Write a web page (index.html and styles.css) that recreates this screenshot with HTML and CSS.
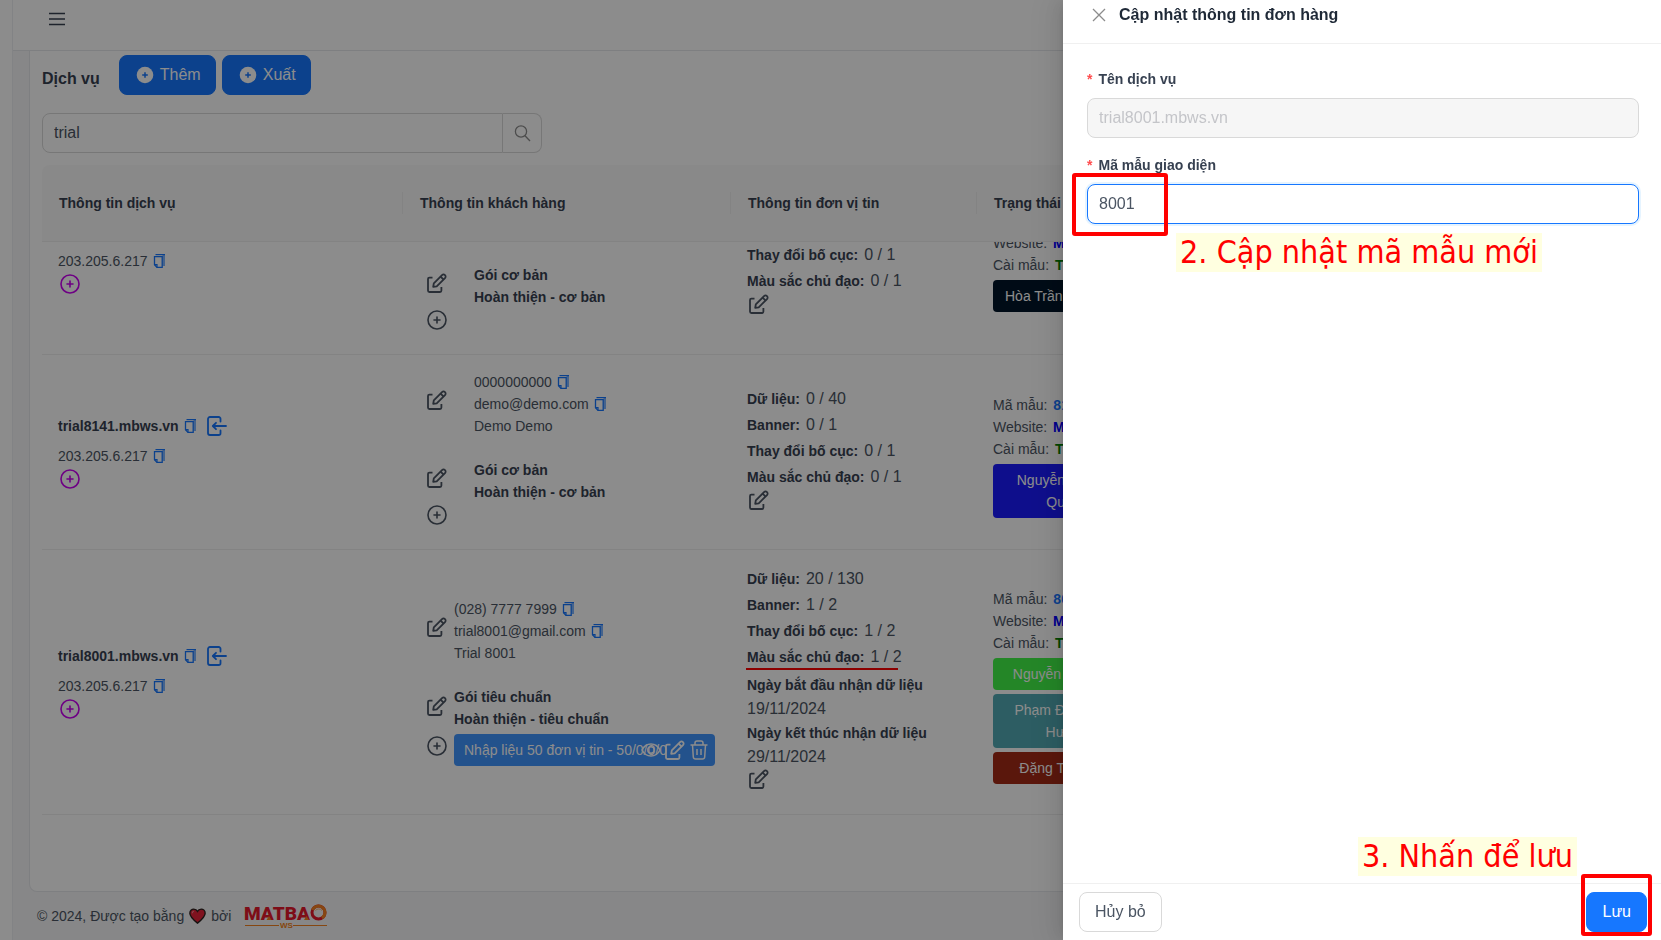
FILE: index.html
```html
<!DOCTYPE html>
<html lang="vi">
<head>
<meta charset="utf-8">
<meta name="viewport" content="width=device-width, initial-scale=1">
<title>Dịch vụ</title>
<link rel="stylesheet" href="styles.css">
</head>
<body>
<svg class="sprite" aria-hidden="true">
  <symbol id="i-edit" viewBox="0 0 20 20" fill="none" stroke="currentColor" stroke-width="1.8" stroke-linejoin="round">
    <path d="M5.500 4.600H2.400a1.400 1.400 0 0 0-1.400 1.400V17.600A1.400 1.400 0 0 0 2.400 19H13a1.400 1.400 0 0 0 1.400-1.400V14"/>
    <path d="M6.200 13.800l.600-3.400L15 2.100a2.100 2.100 0 0 1 3 3L9.700 13.300z"/>
    <path d="M13.600 3.600l3 3"/>
  </symbol>
  <symbol id="i-plus" viewBox="0 0 20 20" fill="none" stroke="currentColor" stroke-width="1.600" stroke-linecap="round">
    <circle cx="10" cy="10" r="9"/><path d="M10 7v6M7 10h6"/>
  </symbol>
  <symbol id="i-plus-fill" viewBox="0 0 18 18">
    <circle cx="9" cy="9" r="8.300" fill="currentColor"/><path d="M9 6.200v5.600M6.200 9h5.600" stroke="#1677ff" stroke-width="1.500"/>
  </symbol>
  <symbol id="i-copy" viewBox="0 0 12 14" fill="none" stroke="currentColor">
    <path d="M9.500 1H12V12H9.500z" fill="currentColor" fill-opacity=".55" stroke="none"/>
    <path d="M2.500.600H12" stroke-width="1.200"/>
    <path d="M1.500 2.600H9.200V13.400H4L1.500 10.800z" stroke-width="1.300"/>
    <path d="M1.500 10.600H4V13.400" stroke-width="1.200"/>
  </symbol>
  <symbol id="i-login" viewBox="0 0 20 20" fill="none" stroke="currentColor" stroke-width="1.800" stroke-linecap="round" stroke-linejoin="round">
    <path d="M13.500 5.500V2.800A1.800 1.800 0 0 0 11.700 1H3A2 2 0 0 0 1 3V17A2 2 0 0 0 3 19H11.700A1.800 1.800 0 0 0 13.500 17.200V14.500"/>
    <path d="M19 10H6M9 6.800L5.800 10 9 13.200"/>
  </symbol>
  <symbol id="i-eye" viewBox="0 0 20 20" fill="none" stroke="currentColor" stroke-width="1.500">
    <path d="M1 10C3 6 6 4 10 4s7 2 9 6c-2 4-5 6-9 6s-7-2-9-6z"/><circle cx="10" cy="10" r="3.200"/>
  </symbol>
  <symbol id="i-trash" viewBox="0 0 20 20" fill="none" stroke="currentColor" stroke-width="1.500">
    <path d="M1.500 5H18.500M6 5V3Q6 1 8 1H12Q14 1 14 3V5M3.500 5L4.300 17Q4.500 19 6.500 19H13.500Q15.500 19 15.700 17L16.500 5M8 9V15M12 9V15"/>
  </symbol>
</svg>

<div class="app">
  <aside class="rail"></aside>
  <div class="shell">
    <header class="topbar">
      <button class="menu" type="button" aria-label="Menu">
        <svg width="16" height="14" viewBox="0 0 16 14" stroke="currentColor" stroke-width="1.500"><path d="M0 1.500H16M0 7H16M0 12.500H16"/></svg>
      </button>
    </header>
    <main class="card">
      <div class="heading">
        <h1>Dịch vụ</h1>
        <button class="btn primary" type="button"><svg class="ic18"><use href="#i-plus-fill"/></svg>Thêm</button>
        <button class="btn primary" type="button"><svg class="ic18"><use href="#i-plus-fill"/></svg>Xuất</button>
      </div>
      <form class="search">
        <input type="text" value="trial" aria-label="Tìm kiếm">
        <button type="button" aria-label="Tìm"><svg width="17" height="17" viewBox="0 0 17 17" fill="none" stroke="currentColor" stroke-width="1.300"><circle cx="7" cy="6.500" r="5.600"/><path d="M11 10.700L16 16"/></svg></button>
      </form>
      <table class="grid head">
        <colgroup><col class="c1"><col class="c2"><col class="c3"><col></colgroup>
        <thead><tr>
          <th><span>Thông tin dịch vụ</span></th>
          <th><span>Thông tin khách hàng</span></th>
          <th><span>Thông tin đơn vị tin</span></th>
          <th><span>Trạng thái</span></th>
        </tr></thead>
      </table>
      <div class="scroller">
        <table class="grid body">
          <colgroup><col class="c1"><col class="c2"><col class="c3"><col></colgroup>
          <tbody>
            <tr class="partial">
              <td class="service">
                <div class="line">203.205.6.217 <button type="button" aria-label="Sao chép"><svg class="copy"><use href="#i-copy"/></svg></button></div>
                <button class="add" type="button" aria-label="Thêm IP"><svg class="ic20"><use href="#i-plus"/></svg></button>
              </td>
              <td class="customer wide">
                <div class="pair pack">
                  <div class="tools"><button type="button" aria-label="Sửa gói"><svg class="ic20"><use href="#i-edit"/></svg></button><button type="button" aria-label="Thêm gói"><svg class="ic20"><use href="#i-plus"/></svg></button></div>
                  <div><b>Gói cơ bản</b><b>Hoàn thiện - cơ bản</b></div>
                </div>
              </td>
              <td class="units">
                <p><b>Thay đổi bố cục:</b>0 / 1</p>
                <p><b>Màu sắc chủ đạo:</b>0 / 1</p>
                <button class="modify" type="button" aria-label="Sửa"><svg class="ic20"><use href="#i-edit"/></svg></button>
              </td>
              <td class="status">
                <p>Website: <b class="blue">M</b></p>
                <p>Cài mẫu: <b class="green">T</b></p>
                <div class="tag navy">Hòa Trần&nbsp;</div>
              </td>
            </tr>
            <tr>
              <td class="service">
                <div class="line site"><b>trial8141.mbws.vn</b> <button type="button" aria-label="Sao chép"><svg class="copy"><use href="#i-copy"/></svg></button><button class="login" type="button" aria-label="Đăng nhập"><svg class="ic20"><use href="#i-login"/></svg></button></div>
                <div class="line">203.205.6.217 <button type="button" aria-label="Sao chép"><svg class="copy"><use href="#i-copy"/></svg></button></div>
                <button class="add" type="button" aria-label="Thêm IP"><svg class="ic20"><use href="#i-plus"/></svg></button>
              </td>
              <td class="customer wide">
                <div class="pair">
                  <div class="tools"><button type="button" aria-label="Sửa khách hàng"><svg class="ic20"><use href="#i-edit"/></svg></button></div>
                  <div>
                    <div class="line">0000000000 <button type="button" aria-label="Sao chép"><svg class="copy"><use href="#i-copy"/></svg></button></div>
                    <div class="line">demo@demo.com <button type="button" aria-label="Sao chép"><svg class="copy"><use href="#i-copy"/></svg></button></div>
                    <div class="line">Demo Demo</div>
                  </div>
                </div>
                <div class="pair pack">
                  <div class="tools"><button type="button" aria-label="Sửa gói"><svg class="ic20"><use href="#i-edit"/></svg></button><button type="button" aria-label="Thêm gói"><svg class="ic20"><use href="#i-plus"/></svg></button></div>
                  <div><b>Gói cơ bản</b><b>Hoàn thiện - cơ bản</b></div>
                </div>
              </td>
              <td class="units">
                <p><b>Dữ liệu:</b>0 / 40</p>
                <p><b>Banner:</b>0 / 1</p>
                <p><b>Thay đổi bố cục:</b>0 / 1</p>
                <p><b>Màu sắc chủ đạo:</b>0 / 1</p>
                <button class="modify" type="button" aria-label="Sửa"><svg class="ic20"><use href="#i-edit"/></svg></button>
              </td>
              <td class="status">
                <p>Mã mẫu: <b class="link">8141</b></p>
                <p>Website: <b class="blue">M</b></p>
                <p>Cài mẫu: <b class="green">T</b></p>
                <div class="tag indigo">Nguyễn<br>Qu</div>
              </td>
            </tr>
            <tr>
              <td class="service">
                <div class="line site"><b>trial8001.mbws.vn</b> <button type="button" aria-label="Sao chép"><svg class="copy"><use href="#i-copy"/></svg></button><button class="login" type="button" aria-label="Đăng nhập"><svg class="ic20"><use href="#i-login"/></svg></button></div>
                <div class="line">203.205.6.217 <button type="button" aria-label="Sao chép"><svg class="copy"><use href="#i-copy"/></svg></button></div>
                <button class="add" type="button" aria-label="Thêm IP"><svg class="ic20"><use href="#i-plus"/></svg></button>
              </td>
              <td class="customer">
                <div class="pair">
                  <div class="tools"><button type="button" aria-label="Sửa khách hàng"><svg class="ic20"><use href="#i-edit"/></svg></button></div>
                  <div>
                    <div class="line">(028) 7777 7999 <button type="button" aria-label="Sao chép"><svg class="copy"><use href="#i-copy"/></svg></button></div>
                    <div class="line">trial8001@gmail.com <button type="button" aria-label="Sao chép"><svg class="copy"><use href="#i-copy"/></svg></button></div>
                    <div class="line">Trial 8001</div>
                  </div>
                </div>
                <div class="pair pack">
                  <div class="tools"><button type="button" aria-label="Sửa gói"><svg class="ic20"><use href="#i-edit"/></svg></button><button type="button" aria-label="Thêm gói"><svg class="ic20"><use href="#i-plus"/></svg></button></div>
                  <div class="grow">
                    <b>Gói tiêu chuẩn</b><b>Hoàn thiện - tiêu chuẩn</b>
                    <div class="addon">Nhập liệu 50 đơn vị tin - 50/0/0/0
                      <span class="actions">
                        <button type="button" aria-label="Xem"><svg class="ic20"><use href="#i-eye"/></svg></button>
                        <button type="button" aria-label="Sửa"><svg class="ic20"><use href="#i-edit"/></svg></button>
                        <button type="button" aria-label="Xóa"><svg class="ic20"><use href="#i-trash"/></svg></button>
                      </span>
                    </div>
                  </div>
                </div>
              </td>
              <td class="units">
                <p><b>Dữ liệu:</b>20 / 130</p>
                <p><b>Banner:</b>1 / 2</p>
                <p><b>Thay đổi bố cục:</b>1 / 2</p>
                <p class="marked"><b>Màu sắc chủ đạo:</b>1 / 2</p>
                <dl>
                  <dt>Ngày bắt đầu nhận dữ liệu</dt><dd>19/11/2024</dd>
                  <dt>Ngày kết thúc nhận dữ liệu</dt><dd>29/11/2024</dd>
                </dl>
                <button class="modify" type="button" aria-label="Sửa"><svg class="ic20"><use href="#i-edit"/></svg></button>
              </td>
              <td class="status">
                <p>Mã mẫu: <b class="link">8001</b></p>
                <p>Website: <b class="blue">M</b></p>
                <p>Cài mẫu: <b class="green">T</b></p>
                <div class="tag lime">Nguyễn&nbsp;</div>
                <div class="tag teal">Phạm Đ<br>Hư</div>
                <div class="tag brick">Đặng T</div>
              </td>
            </tr>
          </tbody>
        </table>
      </div>
    </main>
    <footer class="footer">
      <span>© 2024, Được tạo bằng</span>
      <svg class="heart" viewBox="0 0 16 15"><path d="M8 14.200C4 11 .800 8.300.800 4.900.800 2.600 2.500 1 4.500 1 6 1 7.300 1.800 8 3.100 8.700 1.800 10 1 11.500 1c2 0 3.700 1.600 3.700 3.900C15.200 8.300 12 11 8 14.200z" fill="#e8213a" stroke="#2b2320" stroke-width="1.300"/><path d="M3 5Q3 3.200 4.600 3" stroke="#f58a94" fill="none"/></svg>
      <span>bởi</span>
      <svg class="logo" viewBox="0 0 82 26" role="img" aria-label="MATBAO WS">
        <text class="logo-name" x="-1" y="17">MATBA</text>
        <circle cx="73.500" cy="9.500" r="6.500" fill="none" stroke="#e5192d" stroke-width="3"/>
        <path d="M67.500 7A6.500 6.500 0 1 1 77 15" fill="none" stroke="#f58220" stroke-width="3"/>
        <path d="M70.500 7.500A4.200 4.200 0 0 1 77 7.500" fill="none" stroke="#f9b27a" stroke-width="1"/>
        <path d="M21.500 17l2.500-4 2.500 4zM59 17l2.500-4 2.500 4z" fill="#f58220"/>
        <path d="M0 22.500H34M48 22.500H82" stroke="#f58220"/>
        <text class="logo-sub" x="35" y="25">WS</text>
      </svg>
    </footer>
  </div>
</div>

<div class="mask"></div>

<section class="drawer" role="dialog" aria-labelledby="drawer-title">
  <header class="drawer-head">
    <button type="button" aria-label="Đóng"><svg width="14" height="14" viewBox="0 0 14 14" stroke="currentColor" stroke-width="1.300"><path d="M1 1L13 13M13 1L1 13"/></svg></button>
    <h2 id="drawer-title">Cập nhật thông tin đơn hàng</h2>
  </header>
  <form class="drawer-body" id="order">
    <div class="field">
      <label for="service-name"><i>*</i>Tên dịch vụ</label>
      <input id="service-name" type="text" value="trial8001.mbws.vn" disabled>
    </div>
    <div class="field">
      <label for="template-code"><i>*</i>Mã mẫu giao diện</label>
      <div class="control">
        <input id="template-code" class="active" type="text" value="8001">
        <span class="frame frame-code"></span>
        <span class="note note-code">2. Cập nhật mã mẫu mới</span>
      </div>
    </div>
  </form>
  <footer class="drawer-foot">
    <button class="btn" type="button">Hủy bỏ</button>
    <div class="control">
      <button class="btn primary save" type="submit" form="order">Lưu</button>
      <span class="frame frame-save"></span>
      <span class="note note-save">3. Nhấn để lưu</span>
    </div>
  </footer>
</section>
</body>
</html>
```
FILE: styles.css
```css
* { box-sizing: border-box; }

body {
  margin: 0;
  overflow: hidden;
  font-family: "Liberation Sans", Arial, sans-serif;
  font-size: 14px;
  line-height: 22px;
  color: #4b5563;
  background: #fff;
}

button, input { font: inherit; color: inherit; }
button { padding: 0; border: 0; background: none; display: inline-flex; align-items: center; justify-content: center; }
p, h1, h2, dl, dd { margin: 0; }
b { color: #374151; }

.sprite { display: none; }
.ic20 { width: 20px; height: 20px; }
.ic18 { width: 18px; height: 18px; }
.copy { width: 12px; height: 14px; }

/* Shell */
.app { display: flex; height: 100vh; }
.rail { width: 13px; flex: none; border-right: 1px solid #edeff2; }
.shell { flex: 1; min-width: 0; display: flex; flex-direction: column; background: #f6f6f7; }
.topbar {
  display: flex;
  align-items: flex-start;
  flex: none;
  height: 51px;
  padding: 12px 36px;
  background: #fff;
  border-bottom: 1px solid #e6e8ec;
}
.menu { color: #374151; }
.menu svg { display: block; }

.card {
  flex: 1;
  min-height: 0;
  margin: 0 16px;
  padding: 4px 12px 0;
  background: #fff;
  border: 1px solid #e6e8ec;
  border-top: 0;
  border-radius: 0 0 8px 8px;
}

.btn {
  height: 40px;
  padding: 0 15px;
  font-size: 16px;
  line-height: 24px;
  background: #fff;
  border: 1px solid #d9d9d9;
  border-radius: 8px;
}
.btn.primary { gap: 6px; color: #fff; background: #1677ff; border-color: #1677ff; }

.heading { display: flex; gap: 6px; }
.heading h1 { margin-right: 13px; padding-top: 13px; font-size: 16px; line-height: 22px; color: #374151; }
.heading .btn { padding: 0 14px 0 16px; }

.search { display: flex; width: 500px; margin-top: 18px; }
.search input { flex: 1; min-width: 0; height: 40px; padding: 0 11px; font-size: 16px; border: 1px solid #d9d9d9; border-radius: 8px 0 0 8px; background: #fff; outline: 0; }
.search button { width: 39px; border: 1px solid #d9d9d9; border-left: 0; border-radius: 0 8px 8px 0; color: #8c8c8c; }

/* Tables */
.grid { width: 100%; table-layout: fixed; border-collapse: separate; border-spacing: 0; }
.c1 { width: 361px; }
.c2 { width: 328px; }
.c3 { width: 246px; }

.head { margin-top: 12px; }
.head th {
  height: 77px;
  padding: 0;
  text-align: left;
  color: #374151;
  background: #fafafa;
  border-bottom: 1px solid #eeeeee;
}
.head th:first-child { border-top-left-radius: 8px; }
.head th span { display: block; padding: 0 17px; border-right: 1px solid #eeeeee; }

.scroller { overflow: hidden; }
.body td { padding: 16px; vertical-align: middle; border-bottom: 1px solid #eeeeee; }
.body { margin-top: -10px; }

.line { display: flex; align-items: center; gap: 5px; height: 22px; }
.line button { height: 22px; color: #1677ff; }
.site { height: 37px; }
.line .login { margin-left: 6px; }

.add { display: block; height: 30px; margin-left: 2px; padding: 2px 0 8px; color: #c800f0; }

.customer .pair { display: grid; grid-template-columns: 35px 1fr; }
.customer.wide .pair { grid-template-columns: 55px 1fr; }
.pair + .pair { margin-top: 22px; }
.pair b { display: block; }
.tools { display: flex; flex-direction: column; align-items: flex-start; padding: 19px 0 0 8px; }
.pack .tools { justify-content: space-around; padding-top: 0; min-height: 74px; }
.tools button, .modify { color: #4b5563; }
.modify { height: 29px; padding: 0 0 9px 2px; display: block; }

.addon {
  position: relative;
  margin-top: 4px;
  padding: 5px 10px;
  color: #fff;
  background: #4096ff;
  border-radius: 4px;
  white-space: nowrap;
}
.actions { position: absolute; top: 6px; right: 6px; display: flex; gap: 4px; }

.units p { position: relative; height: 26px; line-height: 26px; font-size: 16px; }
.units p b { margin-right: 6px; font-size: 14px; }
.units dl { margin-top: 3px; line-height: 24px; }
.units dt { font-weight: bold; color: #374151; }
.units dd { font-size: 16px; }
.marked::after { content: ""; position: absolute; left: -1px; bottom: 0; width: 152px; height: 2px; background: #f00; }

.body .status { padding-top: 24px; }
.status p b { margin-left: 2px; }
.status .link { color: #1677ff; }
.status .blue { color: #0000ff; }
.status .green { color: #008000; }
.tag { width: 140px; margin-top: 4px; padding: 5px 68px 5px 12px; text-align: right; color: #fff; border-radius: 4px; white-space: nowrap; }
.navy { background: #001529; }
.indigo { background: #1a1aff; }
.lime { background: #42f548; }
.teal { background: #52aab4; }
.brick { background: #a52a16; }

/* First row sits partly under the table head */
.body .partial td { padding-top: 0; vertical-align: bottom; }
.body .partial .service { padding-bottom: 52px; }
.body .partial .units { padding-bottom: 31px; }
.body .partial .status { padding-bottom: 42px; }

/* Page footer */
.footer { flex: none; display: flex; align-items: center; height: 48px; padding: 0 24px; }
.heart { width: 17px; height: 16px; margin: 0 5px; }
.logo { width: 82px; height: 26px; margin-left: 14px; overflow: visible; }
.logo-name { font: 900 19px Roboto, sans-serif; fill: #e5192d; }
.logo-sub { font: bold 8px "Liberation Sans", sans-serif; fill: #f58220; }

/* Drawer */
.mask { position: fixed; inset: 0; background: rgba(0, 0, 0, 0.45); }
.drawer {
  position: fixed;
  inset: 0 0 0 auto;
  width: 36%;
  display: flex;
  flex-direction: column;
  background: #fff;
  box-shadow: -6px 0 16px rgba(0, 0, 0, 0.08), -3px 0 6px -4px rgba(0, 0, 0, 0.12), -9px 0 28px 8px rgba(0, 0, 0, 0.05);
}
.drawer-head { display: flex; align-items: center; gap: 13px; padding: 2px 29px 16px; border-bottom: 1px solid #f0f0f0; }
.drawer-head button { color: #8c8c8c; }
.drawer-head h2 { font-size: 16px; line-height: 25px; color: #1f2937; }
.drawer-body { flex: 1; padding: 24px 22px 24px 24px; }
.field { margin-bottom: 16px; }
.field label { display: block; margin-bottom: 8px; font-weight: bold; color: #374151; }
.field i { margin-right: 6px; font-style: normal; color: #ff4d4f; }
.field input { display: block; width: 100%; height: 40px; padding: 0 11px; font-size: 16px; border: 1px solid #d9d9d9; border-radius: 8px; outline: 0; }
.field input:disabled { color: #c4c5c9; background: #f6f6f6; }
.field .active { border-color: #1677ff; box-shadow: 0 0 0 2px rgba(5, 145, 255, 0.1); }
.drawer-foot { display: flex; justify-content: space-between; padding: 8px 14px 8px 16px; border-top: 1px solid #f0f0f0; }

/* Tutorial call-outs */
.control { position: relative; }
.frame { position: absolute; border: 4px solid #f00; border-radius: 3px; pointer-events: none; }
.frame-code { left: -15px; top: -11px; width: 96px; height: 63px; }
.frame-save { inset: -18px -5px -4px; }
.note {
  position: absolute;
  padding: 0 4px;
  font: 32px/39px "DejaVu Sans Condensed", "DejaVu Sans", sans-serif;
  white-space: nowrap;
  color: #f00;
  background: #ffffe0;
}
.note-code { left: 89px; top: 49px; }
.note-save { right: 70px; bottom: 56px; }
```
